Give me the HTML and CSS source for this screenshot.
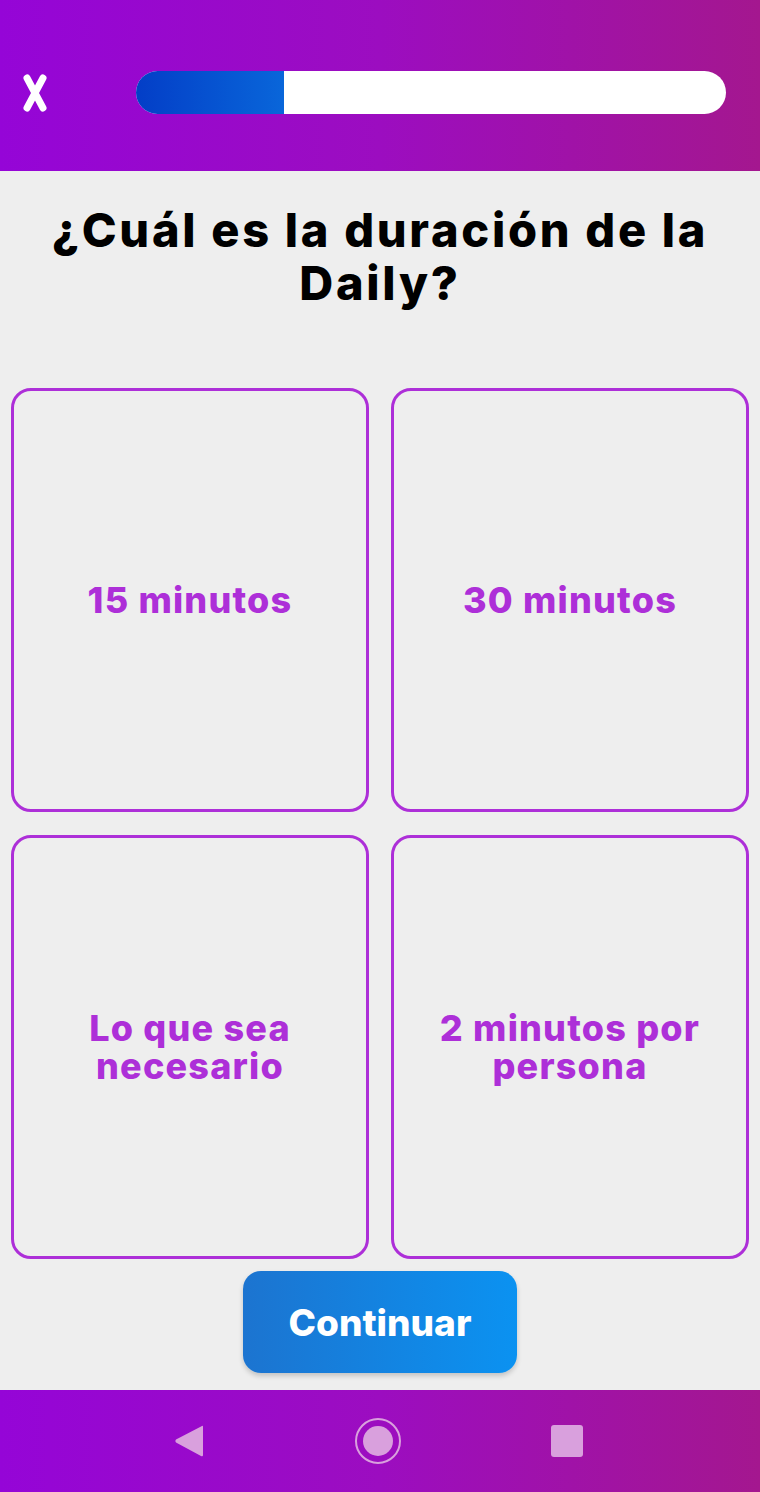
FILE: index.html
```html
<!DOCTYPE html>
<html lang="es">
<head>
<meta charset="utf-8">
<title>Quiz</title>
<link rel="stylesheet" href="styles.css">
</head>
<body>
<div class="screen">
  <header class="topbar">
    <button class="close" aria-label="Cerrar">
      <svg width="24" height="38" viewBox="0 0 24 38"><path d="M4 4 L20 34 M20 4 L4 34" stroke="#fff" stroke-width="7" stroke-linecap="round" fill="none"/></svg>
    </button>
    <div class="progress"><div class="progress-fill" style="width:25%"></div></div>
  </header>
  <main class="content">
    <h1 class="question">¿Cuál es la duración de la Daily?</h1>
    <div class="options">
      <div class="option"><span>15 minutos</span></div>
      <div class="option"><span>30 minutos</span></div>
      <div class="option"><span>Lo que sea<br>necesario</span></div>
      <div class="option"><span>2 minutos por<br>persona</span></div>
    </div>
    <button class="continue">Continuar</button>
  </main>
  <nav class="navbar">
    <svg class="nav-icon" width="32" height="36" viewBox="0 0 32 36"><path d="M29 3 Q30 2 30 4 L30 32 Q30 34 28 33 L3 19.5 Q1.5 18 3 16.5 Z" fill="#d9a0dd"/></svg>
    <svg class="nav-icon" width="48" height="48" viewBox="0 0 48 48"><circle cx="24" cy="24" r="22" fill="none" stroke="#d9a0dd" stroke-width="2"/><circle cx="24" cy="24" r="15" fill="#d9a0dd"/></svg>
    <svg class="nav-icon" width="34" height="34" viewBox="0 0 34 34"><rect x="1" y="1" width="32" height="32" rx="3" fill="#d9a0dd"/></svg>
  </nav>
</div>
</body>
</html>
```
FILE: styles.css
```css
* { box-sizing: border-box; }
html, body { margin: 0; padding: 0; }
body {
  width: 760px;
  height: 1492px;
  background: #eeeeee;
  font-family: "Inter", "Noto Sans", sans-serif;
}
.screen {
  display: flex;
  flex-direction: column;
  height: 1492px;
}
.topbar {
  height: 171px;
  flex: none;
  background: linear-gradient(90deg, #9505d7 0%, #9c0dc0 50%, #a4178f 100%);
  display: flex;
  align-items: center;
  padding: 14px 34px 0 23px;
}
.close {
  background: none;
  border: none;
  padding: 0;
  width: 24px;
  height: 38px;
  margin-right: 89px;
  display: flex;
}
.progress {
  flex: 1;
  height: 43px;
  background: #ffffff;
  border-radius: 22px;
  overflow: hidden;
  display: flex;
}
.progress-fill {
  height: 100%;
  background: linear-gradient(90deg, #033ec7, #0966da);
}
.content {
  flex: 1;
  display: flex;
  flex-direction: column;
  align-items: center;
  padding: 0 11px;
}
.question {
  margin: 32px 0 0;
  height: 185px;
  padding: 0 20px;
  font-size: 47px;
  line-height: 53px;
  font-weight: 800;
  letter-spacing: 2.7px;
  color: #000;
  text-align: center;
}
.options {
  width: 100%;
  display: grid;
  grid-template-columns: 1fr 1fr;
  grid-template-rows: 424px 424px;
  column-gap: 22px;
  row-gap: 23px;
}
.option {
  border: 3.5px solid #ad2fd8;
  border-radius: 20px;
  display: flex;
  align-items: center;
  justify-content: center;
  text-align: center;
  color: #ad2fd8;
  font-size: 36px;
  line-height: 38px;
  font-weight: 800;
  letter-spacing: 1.2px;
}
.continue {
  margin-top: 12px;
  width: 274px;
  height: 102px;
  border: none;
  border-radius: 18px;
  background: linear-gradient(90deg, #1c74d0, #0b92f1);
  box-shadow: 0 3px 5px rgba(0,0,0,0.18);
  color: #fff;
  font-family: "Inter", "Noto Sans", sans-serif;
  font-size: 37px;
  font-weight: 800;
}
.navbar {
  height: 102px;
  flex: none;
  background: linear-gradient(90deg, #9505d7 0%, #9c0dc0 50%, #a4178f 100%);
  display: flex;
  align-items: center;
  justify-content: space-between;
  padding: 0 176px 0 173px;
}
```
